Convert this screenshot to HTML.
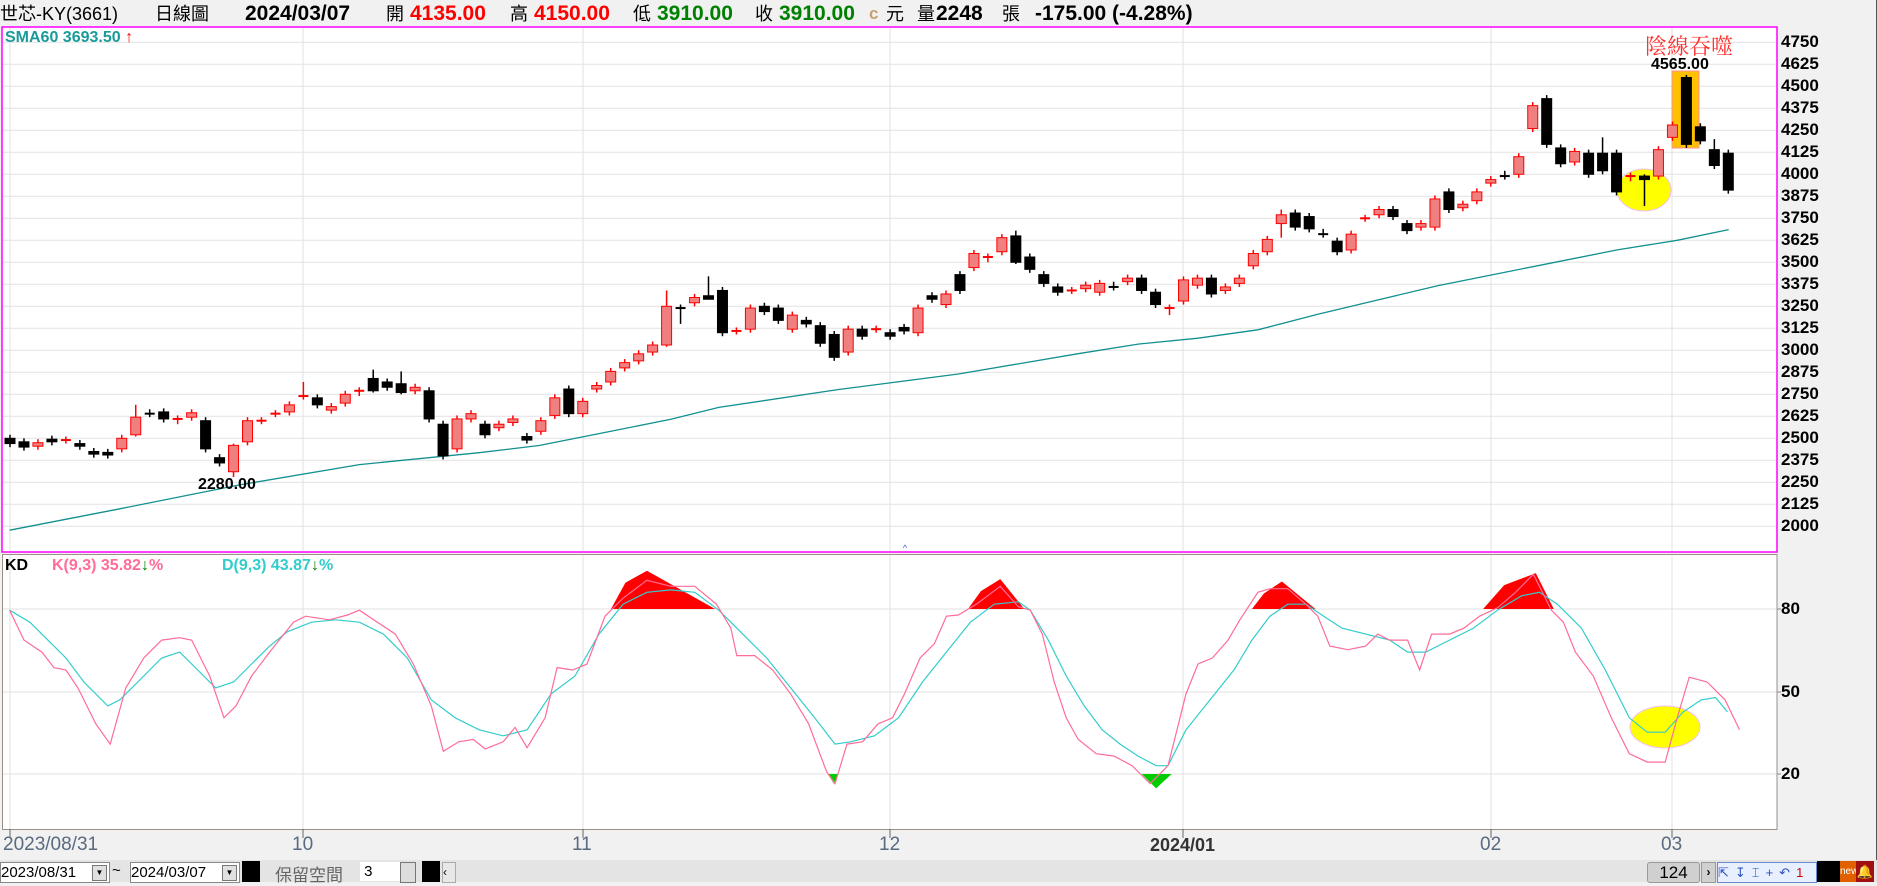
<!DOCTYPE html>
<html><head><meta charset="utf-8">
<style>
html,body{margin:0;padding:0;}
body{width:1877px;height:882px;overflow:hidden;background:#f0f1f0;position:relative;font-family:"Liberation Sans","Noto Sans CJK TC",sans-serif;}
.a{position:absolute;white-space:nowrap;}
.h{top:1px;font-size:21px;line-height:26px;}
.b{font-weight:bold;}
.cj{font-size:18px;}
.ax{font-size:17px;font-weight:bold;color:#000;left:1781px;line-height:18px;}
.xl{top:834px;font-size:19px;color:#5a6a80;line-height:22px;}
</style></head><body>
<div class="a h cj" style="left:0;">世芯-KY(3661)</div>
<div class="a h cj" style="left:155px;">日線圖</div>
<div class="a h b" style="left:245px;">2024/03/07</div>
<div class="a h cj" style="left:386px;">開</div>
<div class="a h b" style="left:410px;color:#f00;">4135.00</div>
<div class="a h cj" style="left:510px;">高</div>
<div class="a h b" style="left:534px;color:#f00;">4150.00</div>
<div class="a h cj" style="left:633px;">低</div>
<div class="a h b" style="left:657px;color:#008000;">3910.00</div>
<div class="a h cj" style="left:755px;">收</div>
<div class="a h b" style="left:779px;color:#008000;">3910.00</div>
<div class="a h b" style="left:869px;color:#c8a070;font-size:17px;">c</div>
<div class="a h cj" style="left:886px;">元</div>
<div class="a h cj" style="left:917px;">量</div>
<div class="a h b" style="left:936px;">2248</div>
<div class="a h cj" style="left:1002px;">張</div>
<div class="a h b" style="left:1035px;">-175.00 (-4.28%)</div>

<svg class="a" style="left:0;top:0" width="1877" height="882" xmlns="http://www.w3.org/2000/svg">
<rect x="2" y="27" width="1775" height="525" fill="#fff" stroke="#f0f" stroke-width="1.5"/>
<rect x="2.5" y="554.5" width="1774.5" height="275" fill="#fff" stroke="#9a8f85" stroke-width="1"/>
<g id="grid" stroke="#e2e2e2" stroke-width="1"></g>
<g id="sma"></g>
<g id="candles"></g>
<g id="kd"></g>
<line x1="1876.5" y1="0" x2="1876.5" y2="860" stroke="#555"/>
<text x="905" y="551" font-size="9" fill="#4060c0" text-anchor="middle">^</text>
</svg>

<div class="a" style="left:5px;top:29px;font-size:16px;font-weight:bold;color:#1a9a9a;">SMA60 3693.50 <span style="color:#f00;">↑</span></div>
<div class="a" style="left:1645px;top:30px;font-size:22px;color:#ff3030;font-family:'Noto Serif CJK SC','Noto Sans CJK TC',serif;">陰線吞噬</div>
<div class="a" style="left:1651px;top:56px;font-size:16px;font-weight:bold;">4565.00</div>
<div class="a" style="left:198px;top:476px;font-size:16px;font-weight:bold;">2280.00</div>
<div class="a" style="left:5px;top:557px;font-size:16px;font-weight:bold;">KD</div>
<div class="a" style="left:52px;top:557px;font-size:16px;font-weight:bold;color:#ff6c98;">K(9,3) 35.82<span style="color:#008000;">↓</span>%</div>
<div class="a" style="left:222px;top:557px;font-size:16px;font-weight:bold;color:#33cccc;">D(9,3) 43.87<span style="color:#008000;">↓</span>%</div>
<div id="axis"></div>
<div class="a ax" style="top:600px;">80</div>
<div class="a ax" style="top:683px;">50</div>
<div class="a ax" style="top:765px;">20</div>

<div class="a xl" style="left:3px;">2023/08/31</div>
<div class="a xl" style="left:292px;">10</div>
<div class="a xl" style="left:572px;">11</div>
<div class="a xl" style="left:879px;">12</div>
<div class="a xl" style="left:1150px;font-weight:bold;color:#333;font-size:18px;">2024/01</div>
<div class="a xl" style="left:1480px;">02</div>
<div class="a xl" style="left:1661px;">03</div>

<!-- toolbar -->
<div class="a" style="left:0;top:860px;width:1877px;height:22px;background:#e4e4e4;"></div>
<div class="a" style="left:0;top:862px;width:108px;height:19px;background:#fff;border:1px solid #888;font-size:15px;line-height:19px;">2023/08/31<span style="position:absolute;right:2px;top:2px;width:13px;height:14px;background:#e0e0e0;border:1px solid #777;font-size:8px;text-align:center;line-height:14px;">▼</span></div>
<div class="a" style="left:112px;top:862px;font-size:15px;">~</div>
<div class="a" style="left:130px;top:862px;width:108px;height:19px;background:#fff;border:1px solid #888;font-size:15px;line-height:19px;">2024/03/07<span style="position:absolute;right:2px;top:2px;width:13px;height:14px;background:#e0e0e0;border:1px solid #777;font-size:8px;text-align:center;line-height:14px;">▼</span></div>
<div class="a" style="left:242px;top:861px;width:18px;height:21px;background:#000;"></div>
<div class="a" style="left:275px;top:861px;font-size:17px;color:#666;">保留空間</div>
<div class="a" style="left:360px;top:862px;width:40px;height:19px;background:#fff;font-size:15px;line-height:19px;">&nbsp;3</div>
<div class="a" style="left:400px;top:862px;width:14px;height:19px;background:#ddd;border:1px solid #777;"></div>
<div class="a" style="left:422px;top:861px;width:18px;height:21px;background:#000;"></div>
<div class="a" style="left:442px;top:862px;width:12px;height:19px;background:#e8e8e8;border:1px solid #aaa;font-size:12px;line-height:19px;">‹</div>
<div class="a" style="left:1647px;top:862px;width:51px;height:19px;background:#d0d0d0;border:1px solid #999;border-radius:3px;font-size:17px;text-align:center;line-height:19px;">124</div>
<div class="a" style="left:1701px;top:862px;width:13px;height:19px;background:#d0d0d0;border:1px solid #999;font-size:12px;text-align:center;line-height:19px;font-weight:bold;">›</div>
<div class="a" style="left:1717px;top:862px;width:98px;height:19px;background:#e8f0ff;border:1px solid #6a8ad0;font-size:13px;color:#2a50c0;line-height:19px;letter-spacing:6px;">⇱↧⌶+↶<span style="color:#c00;">1</span></div>
<div class="a" style="left:1817px;top:861px;width:23px;height:21px;background:#000;"></div>
<div class="a" style="left:1840px;top:861px;width:16px;height:21px;background:#e06000;color:#fff;font-size:10px;line-height:21px;">new</div>
<div class="a" style="left:1856px;top:861px;width:18px;height:21px;background:#a01010;color:#ffd000;font-size:13px;line-height:21px;text-align:center;">🔔</div>

<script>
var NS="http://www.w3.org/2000/svg";
function el(t,a,p){var e=document.createElementNS(NS,t);for(var k in a)e.setAttribute(k,a[k]);p.appendChild(e);return e;}
var g=document.getElementById("grid");
function py(p){return 42.3+(4750-p)*0.176;}
var ax=document.getElementById("axis"),h="";
for(var p=4750;p>=2000;p-=125){var y=py(p);el("line",{x1:3,y1:y,x2:1776,y2:y},g);h+='<div class="a ax" style="top:'+(y-9)+'px;">'+p+'</div>';}
ax.innerHTML=h;
[609,692,774].forEach(function(y){el("line",{x1:3,y1:y,x2:1776,y2:y},g);el("line",{x1:1777,y1:y,x2:1781,y2:y,stroke:"#888"},g);});
[10,303,583,890,1183,1491,1672].forEach(function(x){el("line",{x1:x,y1:28,x2:x,y2:551},g);el("line",{x1:x,y1:555,x2:x,y2:829},g);el("line",{x1:x,y1:829,x2:x,y2:838,stroke:"#666"},g);});
// highlight shapes main
var cg=document.getElementById("candles");
el("rect",{x:1672,y:71,width:27,height:77,fill:"#ffc000",stroke:"#ff9090"},cg);
el("ellipse",{cx:1644,cy:190,rx:27,ry:21,fill:"#ffff00",stroke:"#f0c0f0"},cg);
var D=[[2500,2470],[2480,2450],[2455,2475],[2495,2480],[2490,2490],[2470,2455],[2425,2410],[2420,2405],[2440,2500],[2520,2620,2690,2510],[2645,2640],[2650,2610],[2600,2610],[2620,2645],[2600,2440],[2390,2360],[2310,2460,2470,2280],[2480,2600],[2600,2600],[2640,2640],[2650,2690],[2740,2740,2820,2720],[2730,2690],[2660,2680],[2700,2750],[2760,2770],[2840,2770,2890,2760],[2820,2790],[2810,2760,2880,2750],[2770,2790],[2770,2610],[2580,2400,2600,2380],[2440,2610],[2610,2640],[2580,2520],[2560,2580],[2590,2610],[2510,2490],[2540,2600],[2630,2730],[2780,2640],[2640,2710],[2780,2800],[2820,2880],[2900,2930],[2940,2980],[2990,3030],[3030,3250,3340,3020],[3250,3240,3260,3150],[3270,3300],[3310,3290,3420,3300],[3340,3100],[3110,3110],[3120,3240],[3250,3220],[3240,3170],[3120,3200],[3170,3150],[3140,3040],[3090,2960],[2990,3120],[3120,3080],[3120,3120],[3100,3080],[3130,3110],[3100,3240],[3310,3290],[3260,3320],[3430,3340],[3470,3550],[3520,3530],[3560,3640],[3650,3500,3680,3490],[3530,3460],[3430,3380],[3360,3330],[3340,3340],[3350,3370],[3330,3380],[3370,3360],[3390,3410],[3410,3340],[3330,3260],[3240,3240,3260,3200],[3280,3400],[3370,3410],[3410,3320],[3340,3360],[3380,3410],[3480,3550],[3560,3630],[3720,3770,3800,3640],[3780,3700],[3760,3690],[3670,3660],[3620,3560],[3570,3660],[3750,3750],[3770,3800],[3800,3760],[3720,3680],[3700,3720],[3700,3860],[3900,3800],[3810,3830],[3850,3900],[3950,3970],[4000,3990],[4000,4100],[4260,4390],[4430,4170,4450,4150],[4150,4060],[4070,4130],[4120,4000],[4120,4020,4210,4000],[4120,3900],[3980,3990],[3990,3970,4000,3820],[3990,4140],[4210,4280],[4550,4170,4565,4150],[4270,4190],[4140,4050,4200,4030],[4120,3910]];
D.forEach(function(d,i){var x=10+i*13.97,o=d[0],c=d[1],hi=d[2]||Math.max(o,c)+20,lo=d[3]||Math.min(o,c)-20;var up=c>=o,col=up?"#f00":"#000";
el("line",{x1:x,y1:py(hi),x2:x,y2:py(lo),stroke:col,"stroke-width":1.5},cg);
if(Math.abs(o-c)<12){el("line",{x1:x-5,y1:py(c),x2:x+5,y2:py(c),stroke:col,"stroke-width":2},cg);}
else{var t=py(Math.max(o,c)),b=py(Math.min(o,c));el("rect",{x:x-5,y:t,width:10,height:b-t,fill:up?"#f08080":"#000",stroke:col,"stroke-width":1},cg);}
});
function pts(a,fy){return a.map(function(q){return (q[0]*1.198).toFixed(1)+","+fy(q[1]).toFixed(1);}).join(" ");}
var S=[[8,443],[100,425],[200,405],[300,388],[400,378],[450,372],[500,362],[560,350],[600,340],[700,325],[800,312],[900,295],[950,287],[1000,282],[1050,275],[1100,262],[1150,250],[1200,238],[1250,228],[1300,218],[1350,208],[1400,200],[1443,191]];
el("polyline",{points:pts(S,function(y){return 42.3+(y-34)*1.193;}),fill:"none",stroke:"#139090","stroke-width":1.3},document.getElementById("sma"));
var kg=document.getElementById("kd");
function ky(y){return 609+(y-509)*1.196;}
[[510,597,540,477],[808,855,835,484],[1045,1098,1070,486],[1238,1297,1282,479]].forEach(function(r){
el("polygon",{points:pts([[r[0],509],[r[0]+(r[2]-r[0])*0.4,r[3]+10],[r[2],r[3]],[r[1],509]],ky),fill:"#f00"},kg);});
el("polygon",{points:pts([[691,647],[700,647],[696,655]],ky),fill:"#0c0"},kg);
el("polygon",{points:pts([[953,647],[978,647],[965,659]],ky),fill:"#0c0"},kg);
el("ellipse",{cx:1665,cy:727,rx:35,ry:21,fill:"#ffff00",stroke:"#f0c0f0"},kg);
var K=[[8,510],[20,535],[35,545],[45,558],[55,560],[65,575],[80,605],[92,622],[105,575],[120,550],[135,535],[150,533],[160,535],[175,565],[187,600],[197,590],[210,565],[225,545],[245,520],[255,515],[275,518],[290,514],[300,510],[315,520],[330,530],[345,555],[360,590],[370,628],[383,620],[395,618],[405,626],[420,620],[430,608],[440,625],[455,600],[465,558],[478,560],[490,555],[505,515],[520,500],[540,485],[560,490],[580,490],[598,505],[610,525],[615,548],[630,548],[645,560],[660,580],[675,605],[690,645],[697,655],[707,622],[720,620],[733,605],[745,600],[755,580],[768,550],[780,538],[790,515],[800,514],[815,505],[835,490],[850,507],[860,510],[870,530],[880,570],[890,600],[900,618],[915,630],[930,632],[945,640],[960,655],[975,640],[990,580],[1000,555],[1012,550],[1025,535],[1035,518],[1050,495],[1060,492],[1075,492],[1090,505],[1100,515],[1110,540],[1125,543],[1140,540],[1150,530],[1160,535],[1175,535],[1185,560],[1195,530],[1210,530],[1222,525],[1235,515],[1250,508],[1265,495],[1280,480],[1295,510],[1305,520],[1315,545],[1330,565],[1345,600],[1360,630],[1375,637],[1390,637],[1400,600],[1410,566],[1425,570],[1440,585],[1452,610]];
var DD=[[8,510],[25,520],[40,535],[55,550],[70,570],[90,590],[100,585],[115,570],[135,550],[150,545],[165,560],[180,575],[195,570],[210,555],[225,540],[240,528],[260,520],[280,518],[300,520],[320,530],[340,550],[360,585],[380,600],[400,610],[420,615],[440,610],[460,580],[480,565],[500,530],[520,505],[540,495],[560,493],[580,495],[600,510],[620,530],[640,550],[660,575],[680,600],[697,622],[710,620],[730,615],[750,600],[770,570],[790,545],[810,520],[830,505],[850,503],[860,510],[875,535],[890,565],[905,590],[920,610],[935,622],[950,632],[965,640],[975,640],[990,610],[1010,585],[1030,560],[1045,535],[1060,515],[1075,505],[1090,505],[1105,515],[1120,525],[1140,530],[1160,535],[1175,545],[1190,545],[1210,535],[1230,525],[1250,510],[1270,498],[1285,495],[1300,505],[1320,525],[1340,560],[1360,600],[1375,612],[1390,612],[1405,595],[1420,585],[1432,583],[1442,595]];
el("polyline",{points:pts(DD,ky),fill:"none",stroke:"#33cccc","stroke-width":1.2},kg);
el("polyline",{points:pts(K,ky),fill:"none",stroke:"#ff6c98","stroke-width":1.2},kg);
</script>
</body></html>
